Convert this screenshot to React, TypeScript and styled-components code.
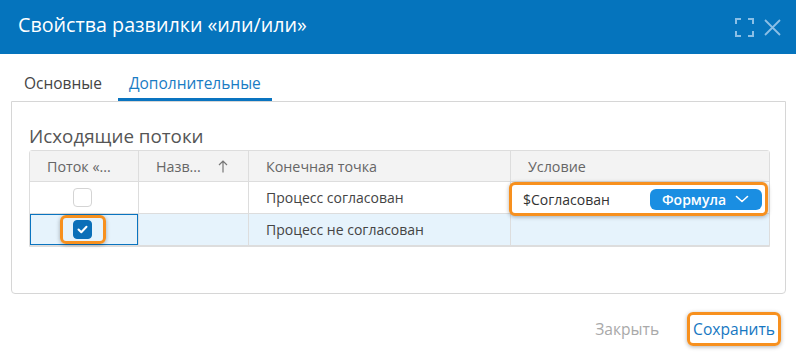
import { FC } from "react"
import styled, { createGlobalStyle } from "styled-components"

const GlobalStyle = createGlobalStyle`
  html, body {
    margin: 0;
    padding: 0;
    background: #ffffff;
  }
  body {
    font-family: "Open Sans", "Noto Sans", Arial, sans-serif;
    color: #333333;
  }
  * {
    box-sizing: border-box;
  }
`

const ORANGE = "#f7901e"
const BLUE = "#0574bd"

type Flow = {
  checked: boolean
  name: string
  target: string
  condition?: string
}

const flows: Flow[] = [
  { checked: false, name: "", target: "Процесс согласован", condition: "$Согласован" },
  { checked: true, name: "", target: "Процесс не согласован" },
]

const MaximizeIcon: FC = () => (
  <svg width="19" height="19" viewBox="0 0 19 19" fill="none" stroke="#8bbfe6" strokeWidth="2">
    <path d="M1 6V1h5M13 1h5v5M18 13v5h-5M6 18H1v-5" />
  </svg>
)

const CloseIcon: FC = () => (
  <svg width="17" height="17" viewBox="0 0 17 17" fill="none" stroke="#8bbfe6" strokeWidth="1.8">
    <path d="M1 1l15 15M16 1L1 16" />
  </svg>
)

const CheckMark: FC = () => (
  <svg width="11" height="9" viewBox="0 0 11 9" fill="none" stroke="#ffffff" strokeWidth="2" strokeLinecap="round" strokeLinejoin="round">
    <path d="M1.5 4.5l2.8 2.8L9.5 1.8" />
  </svg>
)

const Chevron: FC = () => (
  <svg width="14" height="8" viewBox="0 0 14 8" fill="none" stroke="#ffffff" strokeWidth="1.6" strokeLinecap="round" strokeLinejoin="round">
    <path d="M1.5 1.5L7 6.5l5.5-5" />
  </svg>
)

const SortArrow: FC = () => (
  <svg width="10" height="13" viewBox="0 0 10 13" fill="none" stroke="#777777" strokeWidth="1.2">
    <path d="M5 12.5V1M1 5l4-4 4 4" />
  </svg>
)

export default function App() {
  return (
    <>
      <GlobalStyle />
      <Dialog>
        <Header>
          <Title>Свойства развилки «или/или»</Title>
          <HeaderTools>
            <IconButton><MaximizeIcon /></IconButton>
            <IconButton><CloseIcon /></IconButton>
          </HeaderTools>
        </Header>

        <Tabs>
          <Tab>Основные</Tab>
          <Tab $active>Дополнительные</Tab>
        </Tabs>

        <Panel>
          <SectionTitle>Исходящие потоки</SectionTitle>
          <Table>
            <HeadCell>Поток «...</HeadCell>
            <HeadCell>
              Назв...
              <SortArrow />
            </HeadCell>
            <HeadCell>Конечная точка</HeadCell>
            <HeadCell $last>Условие</HeadCell>

            {flows.map((f, i) => (
              <Row key={i} $selected={f.checked}>
                <Cell $center $focused={f.checked}>
                  {f.checked ? (
                    <Highlight>
                      <Checkbox $checked><CheckMark /></Checkbox>
                    </Highlight>
                  ) : (
                    <Checkbox />
                  )}
                </Cell>
                <Cell>{f.name}</Cell>
                <Cell>{f.target}</Cell>
                <Cell $last>
                  {f.condition && (
                    <Editor>
                      <EditorText>{f.condition}</EditorText>
                      <FormulaButton>
                        Формула
                        <Chevron />
                      </FormulaButton>
                    </Editor>
                  )}
                </Cell>
              </Row>
            ))}
          </Table>
        </Panel>

        <Footer>
          <FooterButton>Закрыть</FooterButton>
          <FooterButton $primary>Сохранить</FooterButton>
        </Footer>
      </Dialog>
    </>
  )
}

const Dialog = styled.div`
  width: 796px;
  height: 353px;
  display: flex;
  flex-direction: column;
  background: #ffffff;
  overflow: hidden;
`

const Header = styled.div`
  height: 54px;
  flex-shrink: 0;
  background: ${BLUE};
  display: flex;
  align-items: center;
  justify-content: space-between;
  padding: 0 15px 5px 18px;
`

const Title = styled.div`
  font-size: 19.7px;
  line-height: 27px;
  color: #ffffff;
`

const HeaderTools = styled.div`
  display: flex;
  align-items: center;
  gap: 10px;
  padding-top: 5px;
`

const IconButton = styled.span`
  display: flex;
  align-items: center;
  justify-content: center;
`

const Tabs = styled.div`
  display: flex;
  gap: 5px;
  padding: 19px 0 0 13px;
`

const Tab = styled.div<{ $active?: boolean }>`
  font-size: 15.5px;
  line-height: 20px;
  padding: 0 11px 5px;
  color: ${(p) => (p.$active ? "#1a7cc4" : "#444444")};
  border-bottom: 3px solid ${(p) => (p.$active ? "#0a74c0" : "transparent")};
`

const Panel = styled.div`
  margin: 0 10px 0 11px;
  height: 193px;
  border: 1px solid #d6d6d6;
  border-radius: 0 0 4px 4px;
  padding: 0 15px 0 17px;
`

const SectionTitle = styled.div`
  font-size: 18.8px;
  line-height: 24px;
  color: #555555;
  padding-top: 22px;
  height: 48px;
`

const Table = styled.div`
  display: grid;
  grid-template-columns: 109px 110px 262px 1fr;
  border: 1px solid #dddddd;
  border-radius: 3px 3px 0 0;
`

const HeadCell = styled.div<{ $last?: boolean }>`
  height: 31px;
  display: flex;
  align-items: center;
  justify-content: space-between;
  padding: 0 20px 0 17px;
  background: #f3f3f3;
  font-size: 14.3px;
  color: #666666;
  white-space: nowrap;
  border-right: ${(p) => (p.$last ? "none" : "1px solid #dddddd")};
  border-bottom: 1px solid #dddddd;
  & > svg {
    flex-shrink: 0;
  }
`

const Row = styled.div<{ $selected?: boolean }>`
  display: contents;
  & > div {
    background: ${(p) => (p.$selected ? "#e6f3fc" : "#ffffff")};
  }
`

const Cell = styled.div<{ $center?: boolean; $last?: boolean; $focused?: boolean }>`
  position: relative;
  height: 32px;
  display: flex;
  align-items: center;
  justify-content: ${(p) => (p.$center ? "center" : "flex-start")};
  padding: 0 17px;
  font-size: 14px;
  color: #444444;
  white-space: nowrap;
  border-right: ${(p) => (p.$last ? "none" : "1px solid #dddddd")};
  border-bottom: 1px solid #dddddd;
  box-shadow: ${(p) => (p.$focused ? "inset 0 0 0 1px #0a74c0" : "none")};
`

const Highlight = styled.div`
  display: flex;
  align-items: center;
  justify-content: center;
  border: 3px solid ${ORANGE};
  border-radius: 6px;
  padding: 2px 11px 2px 10px;
  box-shadow: 0 1px 4px rgba(0, 0, 0, 0.3);
  margin-right: 3px;
`

const Checkbox = styled.span<{ $checked?: boolean }>`
  width: 19px;
  height: 19px;
  border-radius: 4px;
  display: flex;
  align-items: center;
  justify-content: center;
  background: ${(p) => (p.$checked ? "#0b6fb8" : "#ffffff")};
  border: 1px solid ${(p) => (p.$checked ? "#0b6fb8" : "#d4d4d4")};
  margin-right: ${(p) => (p.$checked ? "0" : "4px")};
`

const Editor = styled.div`
  position: absolute;
  left: -2px;
  right: 1px;
  top: 0;
  height: 34px;
  display: flex;
  align-items: center;
  justify-content: space-between;
  padding: 0 3px 0 11px;
  background: #ffffff;
  border: 3px solid ${ORANGE};
  border-radius: 6px;
  box-shadow: 0 1px 4px rgba(0, 0, 0, 0.3);
  z-index: 1;
`

const EditorText = styled.span`
  font-size: 14px;
  color: #333333;
`

const FormulaButton = styled.span`
  width: 112px;
  height: 21px;
  display: flex;
  align-items: center;
  justify-content: space-between;
  padding: 0 13px 0 12px;
  border-radius: 6px;
  background: #1a8ee2;
  color: #ffffff;
  font-size: 14px;
  font-weight: 600;
`

const Footer = styled.div`
  flex: 1;
  display: flex;
  align-items: center;
  justify-content: flex-end;
  gap: 22px;
  padding: 10px 15px 0 0;
`

const FooterButton = styled.span<{ $primary?: boolean }>`
  font-size: 15.6px;
  line-height: 22px;
  padding: 3px 3px;
  color: ${(p) => (p.$primary ? "#1677c2" : "#a9a9a9")};
  border: 3px solid ${(p) => (p.$primary ? ORANGE : "transparent")};
  border-radius: 6px;
  box-shadow: ${(p) => (p.$primary ? "0 1px 4px rgba(0, 0, 0, 0.3)" : "none")};
`
